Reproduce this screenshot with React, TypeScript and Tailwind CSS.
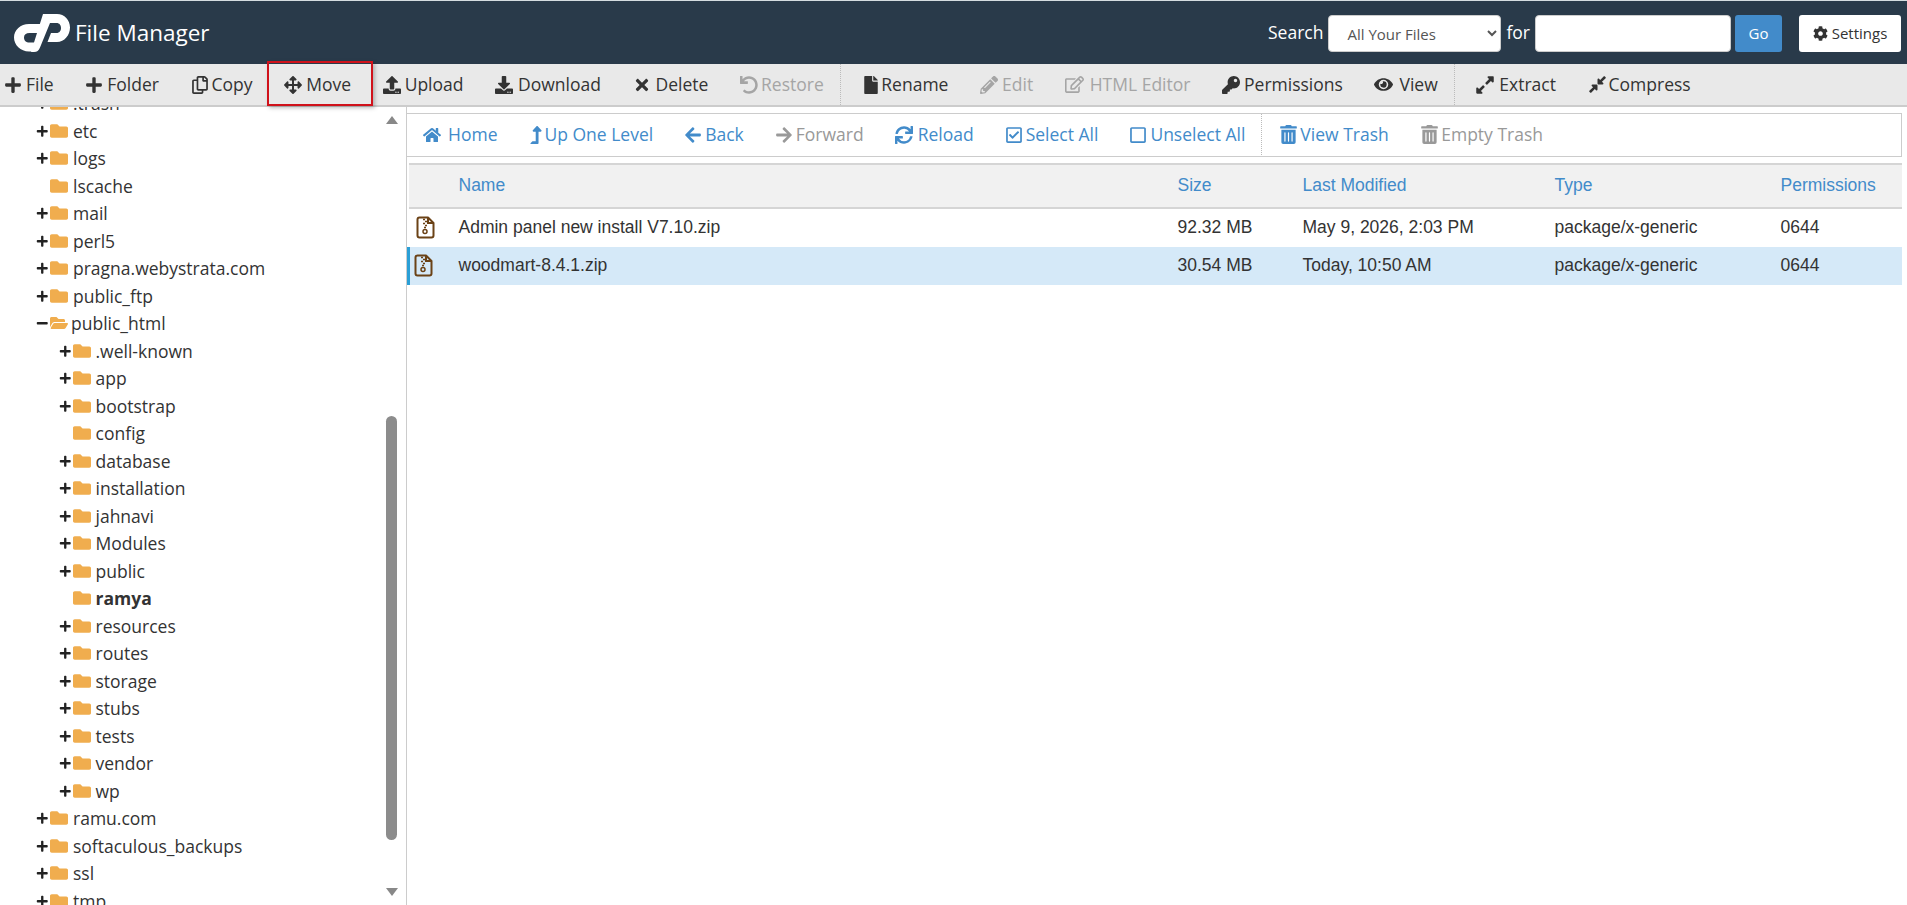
import type { ReactNode } from 'react';
import {
  FaArrowLeft,
  FaArrowRight,
  FaArrowsAlt,
  FaCog,
  FaCompressAlt,
  FaDownload,
  FaExpandAlt,
  FaEye,
  FaFile,
  FaFolder,
  FaFolderOpen,
  FaHome,
  FaKey,
  FaLevelUpAlt,
  FaMinus,
  FaPencilAlt,
  FaPlus,
  FaRegCheckSquare,
  FaRegCopy,
  FaRegEdit,
  FaRegSquare,
  FaSync,
  FaTimes,
  FaTrashAlt,
  FaUndo,
  FaUpload,
} from 'react-icons/fa';

const openSans = "font-['Open_Sans','Noto_Sans',sans-serif]";
const arial = "font-['Liberation_Sans',Arial,sans-serif]";

interface TreeRow {
  name: string;
  level: 1 | 2;
  toggle?: 'plus' | 'minus';
  open?: boolean;
  bold?: boolean;
}

const tree: TreeRow[] = [
  { name: '.trash', level: 1, toggle: 'plus' },
  { name: 'etc', level: 1, toggle: 'plus' },
  { name: 'logs', level: 1, toggle: 'plus' },
  { name: 'lscache', level: 1 },
  { name: 'mail', level: 1, toggle: 'plus' },
  { name: 'perl5', level: 1, toggle: 'plus' },
  { name: 'pragna.webystrata.com', level: 1, toggle: 'plus' },
  { name: 'public_ftp', level: 1, toggle: 'plus' },
  { name: 'public_html', level: 1, toggle: 'minus', open: true },
  { name: '.well-known', level: 2, toggle: 'plus' },
  { name: 'app', level: 2, toggle: 'plus' },
  { name: 'bootstrap', level: 2, toggle: 'plus' },
  { name: 'config', level: 2 },
  { name: 'database', level: 2, toggle: 'plus' },
  { name: 'installation', level: 2, toggle: 'plus' },
  { name: 'jahnavi', level: 2, toggle: 'plus' },
  { name: 'Modules', level: 2, toggle: 'plus' },
  { name: 'public', level: 2, toggle: 'plus' },
  { name: 'ramya', level: 2, bold: true },
  { name: 'resources', level: 2, toggle: 'plus' },
  { name: 'routes', level: 2, toggle: 'plus' },
  { name: 'storage', level: 2, toggle: 'plus' },
  { name: 'stubs', level: 2, toggle: 'plus' },
  { name: 'tests', level: 2, toggle: 'plus' },
  { name: 'vendor', level: 2, toggle: 'plus' },
  { name: 'wp', level: 2, toggle: 'plus' },
  { name: 'ramu.com', level: 1, toggle: 'plus' },
  { name: 'softaculous_backups', level: 1, toggle: 'plus' },
  { name: 'ssl', level: 1, toggle: 'plus' },
  { name: 'tmp', level: 1, toggle: 'plus' },
];

const files = [
  { name: 'Admin panel new install V7.10.zip', size: '92.32 MB', modified: 'May 9, 2026, 2:03 PM', selected: false },
  { name: 'woodmart-8.4.1.zip', size: '30.54 MB', modified: 'Today, 10:50 AM', selected: true },
];

function CpanelLogo() {
  return (
    <svg viewBox="0 0 56 38" className="w-[56px] h-[38px] shrink-0" fill="#fff">
      <path d="M28 10H15C6.500 10 0 16 0 23.500S6.500 37.500 15 37.500h4.500l3.500-9H15.500C12 28.500 10 26.500 10 23.500S12 19 15.500 19H25z" />
      <path d="M29 0h14c7.500 0 13 6 13 13.500S50.500 28 43 28h-9.500l3.500-9h5.500c3 0 4.500-2.300 4.500-5S45.500 9 42.500 9H36L26 33.500C24.800 36.500 23 38 20 38h-3L29 0z" />
    </svg>
  );
}

function ZipIcon() {
  return (
    <svg viewBox="0 0 19 23" className="w-[19px] h-[23px]" fill="none" stroke="#6b4216" strokeWidth="2">
      <path d="M3.500 1.500H12L17.500 7V19.500Q17.500 21.500 15.500 21.500H3.500Q1.500 21.500 1.500 19.500V3.500Q1.500 1.500 3.500 1.500Z" strokeLinejoin="round" />
      <path d="M12 1.500V7H17.500" />
      <path d="M7 3.500H9M9 5.500H11M7 7.500H9M9 9.500H11" strokeWidth="1.500" />
      <path d="M8 11.500H10" strokeWidth="1.500" />
      <circle cx="9" cy="15.500" r="2" strokeWidth="1.500" />
    </svg>
  );
}

function ToolButton({ icon, box, label, disabled }: { icon: ReactNode; box: string; label: string; disabled?: boolean }) {
  return (
    <a className={`flex items-center px-[15.8px] h-full whitespace-nowrap ${disabled ? 'text-[#a5a5a5]' : 'text-[#333]'}`}>
      <span className={`${box} shrink-0 leading-none flex items-center`}>{icon}</span>
      {label}
    </a>
  );
}

function NavButton({ icon, box, label, disabled, wide }: { icon: ReactNode; box: string; label: string; disabled?: boolean; wide?: boolean }) {
  return (
    <a className={`flex items-center h-full whitespace-nowrap ${wide ? 'pl-[17.5px] pr-[14px]' : 'px-[15.5px]'} ${disabled ? 'text-[#999]' : 'text-[#428bca]'}`}>
      <span className={`${box} shrink-0 leading-none flex items-center`}>{icon}</span>
      {label}
    </a>
  );
}

export default function App() {
  return (
    <div className={`w-[1907px] h-[905px] overflow-hidden bg-white flex flex-col ${openSans}`}>
      {/* top bar */}
      <header className="h-[64px] shrink-0 bg-[#293a4a] border-t border-[#d5dde0] flex items-center text-white">
        <div className="pl-[14px] flex items-center gap-[5px]">
          <CpanelLogo />
          <span className="text-[22.5px] leading-none mt-[2px]">File Manager</span>
        </div>
        <div className="ml-auto flex items-center pr-[6px] text-[17.5px] h-[37px] mt-[2px]">
          <span className="mr-[5px] -mt-[3px]">Search</span>
          <select
            defaultValue="all"
            className="w-[173px] h-[37px] bg-white text-[#555] rounded-[4px] pl-[14px] pr-[4px] text-[15px] border border-[#ccc]"
          >
            <option value="all">All Your Files</option>
          </select>
          <span className="mx-[5px] -mt-[3px]">for</span>
          <input className="w-[196px] h-[37px] bg-white rounded-[4px] border border-[#ccc]" />
          <button className="ml-[4px] w-[47px] h-[37px] bg-[#428bca] text-white rounded-[3px] text-[15px]">Go</button>
          <button className="ml-[17px] w-[102px] h-[37px] bg-white text-[#333] rounded-[3px] text-[15px] flex items-center justify-center gap-[4px]">
            <FaCog className="text-[15px]" />
            Settings
          </button>
        </div>
      </header>

      {/* file actions */}
      <div className="relative h-[43px] shrink-0 bg-[#e9e9e9] border-b-2 border-[#ccc] flex items-center text-[17.5px]">
        <div className="flex items-center h-full -ml-[11.8px]">
          <ToolButton icon={<FaPlus />} box="w-[22px] text-[18px]" label="File" />
          <ToolButton icon={<FaPlus />} box="w-[22px] text-[18px]" label="Folder" />
          <ToolButton icon={<FaRegCopy />} box="w-[21px] text-[18px]" label="Copy" />
          <ToolButton icon={<FaArrowsAlt />} box="w-[22px] text-[18px]" label="Move" />
          <ToolButton icon={<FaUpload />} box="w-[22px] text-[18px]" label="Upload" />
          <ToolButton icon={<FaDownload />} box="w-[23px] text-[18px]" label="Download" />
          <ToolButton icon={<FaTimes />} box="w-[23px] text-[18px]" label="Delete" />
          <ToolButton icon={<FaUndo />} box="w-[21px] text-[18px]" label="Restore" disabled />
        </div>
        <div className="w-px h-full border-l border-dotted border-[#bbb]" />
        <div className="flex items-center h-full pl-[6px]">
          <ToolButton icon={<FaFile />} box="w-[19px] text-[18px]" label="Rename" />
          <ToolButton icon={<FaPencilAlt />} box="w-[22px] text-[18px]" label="Edit" disabled />
          <ToolButton icon={<FaRegEdit />} box="w-[25px] text-[19px]" label="HTML Editor" disabled />
          <ToolButton icon={<FaKey />} box="w-[22px] text-[18px]" label="Permissions" />
          <ToolButton icon={<FaEye />} box="w-[25px] text-[19px]" label="View" />
        </div>
        <div className="w-px h-full border-l border-dotted border-[#bbb]" />
        <div className="flex items-center h-full pl-[5px]">
          <ToolButton icon={<FaExpandAlt />} box="w-[24px] text-[20px]" label="Extract" />
          <ToolButton icon={<FaCompressAlt />} box="w-[21px] text-[19px]" label="Compress" />
        </div>
        {/* highlight drawn over the Move button */}
        <div className="absolute left-[267px] top-[-3px] w-[106px] h-[45px] border-[2px] border-[#d0121b] shadow-[2px_2px_4px_rgba(0,0,0,0.25)]" />
      </div>

      <div className="flex-1 flex min-h-0">
        {/* folder tree */}
        <aside className="relative w-[407px] shrink-0 overflow-hidden text-[17.5px] text-[#333]">
          <div className="-mt-[17.5px]">
            {tree.map((row) => (
              <div
                key={row.name}
                className={`h-[27.5px] flex items-center whitespace-nowrap ${row.level === 1 ? 'pl-[36px]' : 'pl-[58.5px]'}`}
              >
                <span className="w-[14px] text-[12.5px] flex items-center text-[#222]">
                  {row.toggle === 'plus' && <FaPlus />}
                  {row.toggle === 'minus' && <FaMinus />}
                </span>
                <span className={`${row.open ? 'w-[21px]' : 'w-[23px]'} text-[18px] text-[#f0ad4e] flex items-center`}>
                  {row.open ? <FaFolderOpen /> : <FaFolder />}
                </span>
                <span className={row.bold ? 'font-bold' : ''}>{row.name}</span>
              </div>
            ))}
          </div>
          <div className="absolute top-[9px] left-[386px] w-0 h-0 border-x-[6px] border-x-transparent border-b-[8px] border-b-[#888]" />
          <div className="absolute top-[309px] left-[386px] w-[11px] h-[424px] rounded-[6px] bg-[#8c8c8c]" />
          <div className="absolute top-[781px] left-[386px] w-0 h-0 border-x-[6px] border-x-transparent border-t-[8px] border-t-[#888]" />
        </aside>

        {/* file list */}
        <main className="flex-1 min-w-0 border-l border-[#ccc] -ml-px pt-[6px] pr-[5px] flex flex-col">
          <nav className="h-[44px] pb-[1px] border border-l-0 border-[#ccc] flex items-center text-[17.5px]">
            <div className="flex items-center h-full pl-[0.5px]">
              <NavButton icon={<FaHome />} box="w-[25px] text-[18px]" label="Home" />
              <NavButton icon={<FaLevelUpAlt />} box="w-[16px] text-[18px]" label="Up One Level" />
              <NavButton icon={<FaArrowLeft />} box="w-[21px] text-[18px]" label="Back" />
              <NavButton icon={<FaArrowRight />} box="w-[21px] text-[18px]" label="Forward" disabled />
              <NavButton icon={<FaSync />} box="w-[23px] text-[18px]" label="Reload" />
              <NavButton icon={<FaRegCheckSquare />} box="w-[21px] text-[18px]" label="Select All" />
              <NavButton icon={<FaRegSquare />} box="w-[21px] text-[18px]" label="Unselect All" />
            </div>
            <div className="w-px h-full border-l border-dotted border-[#bbb]" />
            <div className="flex items-center h-full">
              <NavButton icon={<FaTrashAlt />} box="w-[21px] text-[19px]" label="View Trash" wide />
              <NavButton icon={<FaTrashAlt />} box="w-[21px] text-[19px]" label="Empty Trash" disabled wide />
            </div>
          </nav>

          <table className={`mt-[6px] w-full table-fixed border-collapse text-[17.5px] text-[#333] ${arial}`}>
            <colgroup>
              <col className="w-[50px]" />
              <col className="w-[719px]" />
              <col className="w-[125px]" />
              <col className="w-[252px]" />
              <col className="w-[226px]" />
              <col />
            </colgroup>
            <thead>
              <tr className="h-[44px] bg-[#f1f1f1] border-y-2 border-[#d5d5d5] text-[#428bca] text-left">
                <th className="font-normal" />
                <th className="font-normal pb-[1px]">Name</th>
                <th className="font-normal pb-[1px]">Size</th>
                <th className="font-normal pb-[1px]">Last Modified</th>
                <th className="font-normal pb-[1px]">Type</th>
                <th className="font-normal pb-[1px]">Permissions</th>
              </tr>
            </thead>
            <tbody>
              {files.map((file) => (
                <tr key={file.name} className={`h-[38.5px] ${file.selected ? 'bg-[#d5e9f8]' : 'bg-white'}`}>
                  <td className={file.selected ? 'border-l-[3px] border-[#2a9fd6] pl-[4px]' : 'pl-[7px]'}>
                    <ZipIcon />
                  </td>
                  <td className="pb-[2px]">{file.name}</td>
                  <td className="pb-[2px]">{file.size}</td>
                  <td className="pb-[2px]">{file.modified}</td>
                  <td className="pb-[2px]">package/x-generic</td>
                  <td className="pb-[2px]">0644</td>
                </tr>
              ))}
            </tbody>
          </table>
        </main>
      </div>
    </div>
  );
}
